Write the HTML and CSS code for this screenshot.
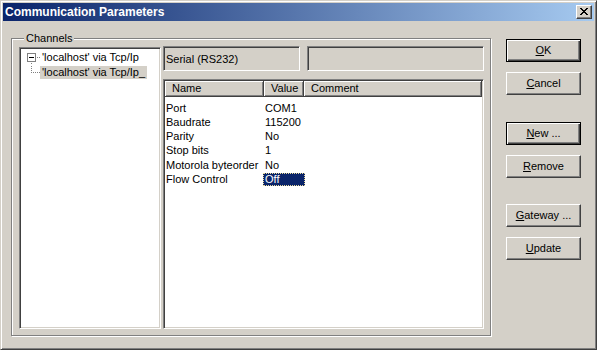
FILE: index.html
```html
<!DOCTYPE html>
<html>
<head>
<meta charset="utf-8">
<title>Communication Parameters</title>
<link rel="stylesheet" href="styles.css">
</head>
<body>
<div class="window">
  <div class="titlebar">
    <span class="title">Communication Parameters</span>
    <div class="close-btn">
      <svg width="8" height="7" viewBox="0 0 8 7"><path d="M0 0h2v1H0zM6 0h2v1H6zM1 1h2v1H1zM5 1h2v1H5zM2 2h4v1H2zM3 3h2v1H3zM2 4h4v1H2zM1 5h2v1H1zM5 5h2v1H5zM0 6h2v1H0zM6 6h2v1H6z" fill="#000"/></svg>
    </div>
  </div>
  <div class="client">
    <fieldset class="group">
      <legend>Channels</legend>
      <div class="group-body">
        <div class="tree">
          <div class="tree-row">
            <svg class="gutter" width="18" height="15" viewBox="0 0 18 15">
              <rect x="5.5" y="3.5" width="8" height="8" fill="#fff" stroke="#808080"/>
              <rect x="7" y="7" width="5" height="1" fill="#000"/>
              <path d="M15 7h1v1h-1zM17 7h1v1h-1zM9 13h1v1H9z" fill="#808080"/>
            </svg>
            <span class="tree-label">'localhost' via Tcp/Ip</span>
          </div>
          <div class="tree-row">
            <svg class="gutter" width="18" height="15" viewBox="0 0 18 15">
              <path d="M9 1h1v1H9zM9 3h1v1H9zM9 5h1v1H9zM9 7h1v1H9zM11 7h1v1h-1zM13 7h1v1h-1zM15 7h1v1h-1zM17 7h1v1h-1z" fill="#808080"/>
            </svg>
            <span class="tree-label selected">'localhost' via Tcp/Ip_</span>
          </div>
        </div>
        <div class="panel">
          <div class="fields">
            <div class="field field-type">Serial (RS232)</div>
            <div class="field field-extra"></div>
          </div>
          <div class="list">
            <div class="list-head">
              <div class="hcell col-name">Name</div>
              <div class="hcell col-value">Value</div>
              <div class="hcell col-comment">Comment</div>
            </div>
            <div class="rows">
              <div class="row"><span class="cell col-name">Port</span><span class="cell col-value">COM1</span><span class="cell col-comment"></span></div>
              <div class="row"><span class="cell col-name">Baudrate</span><span class="cell col-value">115200</span><span class="cell col-comment"></span></div>
              <div class="row"><span class="cell col-name">Parity</span><span class="cell col-value">No</span><span class="cell col-comment"></span></div>
              <div class="row"><span class="cell col-name">Stop bits</span><span class="cell col-value">1</span><span class="cell col-comment"></span></div>
              <div class="row"><span class="cell col-name">Motorola byteorder</span><span class="cell col-value">No</span><span class="cell col-comment"></span></div>
              <div class="row"><span class="cell col-name">Flow Control</span><span class="cell col-value"><span class="sel">Off</span></span><span class="cell col-comment"></span></div>
            </div>
          </div>
        </div>
      </div>
    </fieldset>
    <div class="buttons">
      <div class="btn default"><span><u>O</u>K</span></div>
      <div class="btn"><span><u>C</u>ancel</span></div>
      <div class="btn default sep"><span><u>N</u>ew ...</span></div>
      <div class="btn"><span><u>R</u>emove</span></div>
      <div class="btn sep2"><span><u>G</u>ateway ...</span></div>
      <div class="btn"><span><u>U</u>pdate</span></div>
    </div>
  </div>
</div>
</body>
</html>
```
FILE: styles.css
```css
* { box-sizing: border-box; }
html, body { margin: 0; padding: 0; background: #d4d0c8; }
body {
  font: 11px "Liberation Sans", Arial, sans-serif;
  color: #000;
}
.window {
  width: 597px;
  height: 350px;
  background: #d4d0c8;
  border: 1px solid;
  border-color: #d4d0c8 #404040 #404040 #d4d0c8;
  box-shadow: inset 1px 1px 0 #fff, inset -1px -1px 0 #808080;
  padding: 2px;
  display: flex;
  flex-direction: column;
}
.titlebar {
  height: 18px;
  background: linear-gradient(to right, #0a246a, #a6caf0);
  display: flex;
  align-items: center;
  padding-left: 2px;
  padding-right: 2px;
}
.title {
  color: #fff;
  font-weight: bold;
  font-size: 12px;
  line-height: 14px;
}
.close-btn {
  margin-left: auto;
  width: 16px;
  height: 14px;
  background: #d4d0c8;
  border: 1px solid;
  border-color: #fff #404040 #404040 #fff;
  box-shadow: inset -1px -1px 0 #808080;
  display: flex;
  align-items: center;
  justify-content: center;
  padding-bottom: 1px;
  padding-right: 1px;
}
.close-btn svg { display: block; }
.client {
  flex: 1;
  display: flex;
  padding: 11px 13px 11px 8px;
  gap: 15px;
  min-height: 0;
}
.group {
  flex: 1;
  min-width: 0;
  margin: 0;
  border: 1px solid #808080;
  box-shadow: inset 1px 1px 0 #fff, 1px 1px 0 #fff;
  padding: 1px 6px 5px 7px;
  display: flex;
  flex-direction: column;
}
.group legend {
  padding: 0 2px;
  margin-left: 5px;
  line-height: 13px;
  background: #d4d0c8;
}
.group-body {
  flex: 1;
  display: flex;
  gap: 2px;
  min-height: 0;
}
.tree {
  width: 142px;
  margin-top: 1px;
  margin-bottom: 1px;
  background: #fff;
  border: 1px solid;
  border-color: #808080 #fff #fff #808080;
  box-shadow: inset 1px 1px 0 #404040, inset -1px -1px 0 #d4d0c8;
  padding: 2px 2px;
}
.tree-row {
  display: flex;
  align-items: center;
  height: 15px;
}
.gutter { display: block; flex: none; }
.tree-label {
  padding: 0 2px;
  line-height: 13px;
  white-space: nowrap;
}
.tree-label.selected { background: #d4d0c8; }
.panel {
  flex: 1;
  display: flex;
  flex-direction: column;
  gap: 8px;
  min-width: 0;
}
.fields {
  display: flex;
  gap: 7px;
  height: 25px;
}
.field {
  background: #d4d0c8;
  border: 1px solid;
  border-color: #808080 #fff #fff #808080;
  box-shadow: inset 1px 1px 0 #404040, inset -1px -1px 0 #d4d0c8;
  padding: 0 2px;
  display: flex;
  align-items: center;
  white-space: nowrap;
}
.field-type { width: 137px; }
.field-extra { flex: 1; }
.list {
  flex: 1;
  margin-bottom: 1px;
  background: #fff;
  border: 1px solid;
  border-color: #808080 #fff #fff #808080;
  box-shadow: inset 1px 1px 0 #404040, inset -1px -1px 0 #d4d0c8;
  padding: 1px;
  min-height: 0;
}
.list-head {
  display: flex;
  height: 16px;
}
.hcell {
  background: #d4d0c8;
  border-right: 1px solid #404040;
  border-bottom: 1px solid #404040;
  box-shadow: inset 1px 1px 0 #fff, inset -1px -1px 0 #808080;
  padding-left: 7px;
  line-height: 15px;
  white-space: nowrap;
  overflow: hidden;
}
.col-name { width: 99px; flex: none; }
.col-value { width: 40px; flex: none; }
.col-comment { width: 178px; flex: none; }
.rows { padding-top: 3.5px; }
.row {
  display: flex;
  height: 14.3px;
  line-height: 14.3px;
}
.cell {
  padding-left: 1px;
  white-space: nowrap;
}
.sel {
  display: inline-block;
  margin-left: -2px;
  width: 42px;
  height: 13px;
  line-height: 11px;
  vertical-align: top;
  margin-top: 1px;
  padding-left: 1px;
  background: #0a246a;
  color: #fff;
  border: 1px dotted #e8d99a;
}
.buttons {
  width: 75px;
  display: flex;
  flex-direction: column;
  gap: 10px;
  padding-top: 7px;
}
.btn {
  height: 23px;
  background: #d4d0c8;
  border: 1px solid;
  border-color: #fff #404040 #404040 #fff;
  box-shadow: inset -1px -1px 0 #808080;
  display: flex;
  align-items: center;
  justify-content: center;
  padding-bottom: 1px;
}
.btn.default {
  border: 1px solid #000;
  box-shadow: inset 1px 1px 0 #fff, inset -1px -1px 0 #404040, inset -2px -2px 0 #808080;
}
.btn.sep { margin-top: 17px; }
.btn.sep2 { margin-top: 16px; }
.btn u { text-decoration-thickness: 1px; text-underline-offset: 1px; }
```
